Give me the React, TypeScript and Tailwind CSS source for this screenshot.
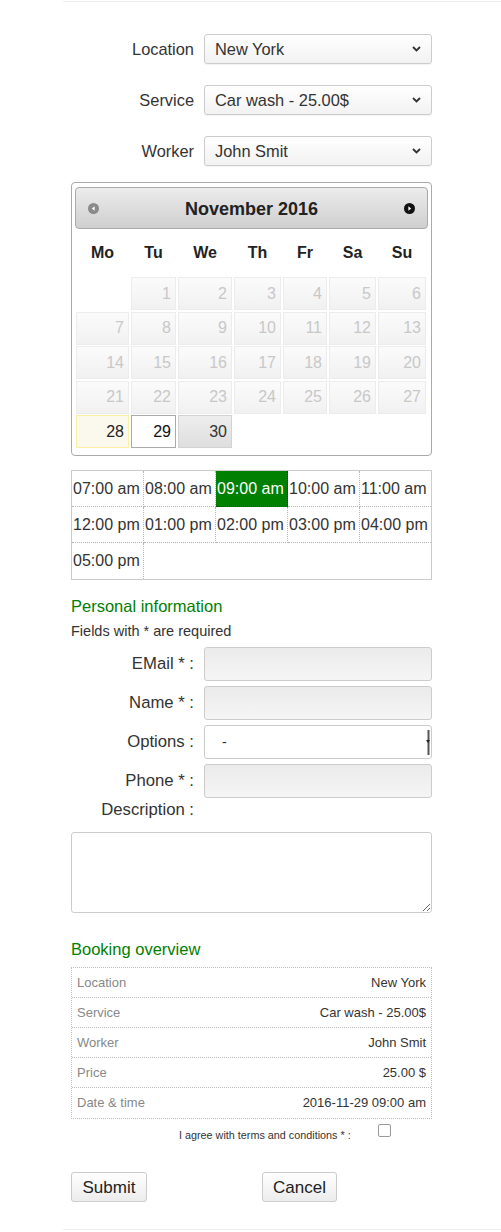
import type { ReactNode } from 'react';

const timeSlots = [
  '07:00 am',
  '08:00 am',
  '09:00 am',
  '10:00 am',
  '11:00 am',
  '12:00 pm',
  '01:00 pm',
  '02:00 pm',
  '03:00 pm',
  '04:00 pm',
  '05:00 pm',
];

const overview = [
  ['Location', 'New York'],
  ['Service', 'Car wash - 25.00$'],
  ['Worker', 'John Smit'],
  ['Price', '25.00 $'],
  ['Date & time', '2016-11-29 09:00 am'],
];

const weekDays = ['Mo', 'Tu', 'We', 'Th', 'Fr', 'Sa', 'Su'];

function Chevron() {
  return (
    <svg width="9" height="6" viewBox="0 0 9 6" className="mr-[10px] shrink-0">
      <path d="M1 1l3.5 3.5L8 1" fill="none" stroke="#333" strokeWidth="1.8" />
    </svg>
  );
}

function SelectRow({ label, value }: { label: string; value: string }) {
  return (
    <div className="flex h-[30px] items-center">
      <div className="w-[123px] pt-px text-right text-[16.4px]">{label}</div>
      <div className="ml-[10px] flex h-[30px] w-[228px] items-center rounded-[3px] border border-[#ccc] bg-gradient-to-b from-white to-[#f2f2f2] shadow-[0_1px_1px_rgba(0,0,0,0.05)]">
        <span className="flex-1 pl-[10px] pt-px text-[16.4px] text-[#333]">{value}</span>
        <Chevron />
      </div>
    </div>
  );
}

function FieldRow({ label, children }: { label: string; children: ReactNode }) {
  return (
    <div className="flex h-[34px] items-center">
      <div className="w-[123px] text-right text-[16.7px]">{label}</div>
      <div className="ml-[10px]">{children}</div>
    </div>
  );
}

function TextInput() {
  return (
    <div className="h-[34px] w-[228px] rounded-[3px] border border-[#ccc] bg-gradient-to-b from-[#ebebeb] to-[#f5f5f5]" />
  );
}

function DayCell({ day }: { day: number }) {
  let cls = 'border-[#ececec] bg-gradient-to-b from-[#fbfbfb] to-[#f1f1f1] text-[#c8c8c8]';
  if (day === 28) cls = 'border-[#fcefa1] bg-[#fbf9ee] text-[#222]';
  if (day === 29) cls = 'border-[#aaa] bg-white text-[#111]';
  if (day === 30) cls = 'border-[#d3d3d3] bg-gradient-to-b from-[#eeeeee] to-[#dedede] text-[#333]';
  return (
    <div className={`flex h-[33px] items-center justify-end border pr-[4px] text-[16px] ${cls}`}>{day}</div>
  );
}

function Calendar() {
  const cells: (number | null)[] = [null];
  for (let d = 1; d <= 30; d++) cells.push(d);
  return (
    <div className="mt-[16px] w-[361px] rounded-[4px] border border-[#aaa] p-[3px] pb-[7px] pt-[4px]">
      <div className="flex h-[42px] items-center rounded-[4px] border border-[#aaa] bg-gradient-to-b from-[#ececec] to-[#cfcfcf] px-[12px]">
        <svg width="11" height="11" viewBox="0 0 11 11">
          <circle cx="5.5" cy="5.5" r="5.5" fill="#8a8a8a" />
          <path d="M3.8 5.5L6.6 3.3v4.4z" fill="#fff" />
        </svg>
        <div className="flex-1 pt-[2px] text-center text-[18px] font-bold text-[#222]">November 2016</div>
        <svg width="11" height="11" viewBox="0 0 11 11">
          <circle cx="5.5" cy="5.5" r="5.5" fill="#111" />
          <path d="M7.2 5.5L4.4 3.3v4.4z" fill="#fff" />
        </svg>
      </div>
      <div className="ml-px grid h-[48px] grid-cols-[53px_45px_54px_47px_44px_47px_48px] items-center gap-x-[2px]">
        {weekDays.map((w) => (
          <div key={w} className="text-center text-[16px] font-bold text-[#222]">
            {w}
          </div>
        ))}
      </div>
      <div className="ml-px grid grid-cols-[53px_45px_54px_47px_44px_47px_48px] gap-x-[2px] gap-y-[1.5px]">
        {cells.map((d, i) => (d === null ? <div key={i} /> : <DayCell key={i} day={d} />))}
      </div>
    </div>
  );
}

function TimeTable() {
  return (
    <div className="mt-[14px] w-[361px] border border-[#ccc]">
      <div className="grid grid-cols-[72px_72px_72px_72px_71px]">
        {timeSlots.map((t, i) => {
          const active = t === '09:00 am';
          const lastCol = i % 5 === 4;
          const lastRow = i >= 10;
          return (
            <div
              key={t}
              className={`flex h-[36px] items-center whitespace-nowrap border-dotted pl-px text-[16px] ${
                lastRow ? 'h-[35px] border-r' : 'border-b'
              } ${lastCol ? '' : 'border-r'} ${
                active ? 'border-[#1a3a1a] bg-[#008000] text-white' : 'border-[#b5b5b5] text-[#333]'
              }`}
            >
              {t}
            </div>
          );
        })}
      </div>
    </div>
  );
}

export default function App() {
  return (
    <div className="min-h-[1232px] bg-white font-['Liberation_Sans',Arial,sans-serif] text-[#333]">
      <div className="ml-[63px] mt-px w-[438px] border-y border-[#eeeeee] pb-[27px] pl-[8px] pt-[32px]">
        <div className="w-[361px]">
          <div className="flex flex-col gap-[21px]">
            <SelectRow label="Location" value="New York" />
            <SelectRow label="Service" value="Car wash - 25.00$" />
            <SelectRow label="Worker" value="John Smit" />
          </div>

          <Calendar />
          <TimeTable />

          <div className="mt-[16px] h-[20px] text-[16.5px] leading-[20px] text-[#008000]">Personal information</div>
          <div className="mt-[6px] h-[18px] text-[14.5px] leading-[18px]">Fields with * are required</div>

          <div className="mt-[7px] flex flex-col gap-[5px]">
            <FieldRow label="EMail * :">
              <TextInput />
            </FieldRow>
            <FieldRow label="Name * :">
              <TextInput />
            </FieldRow>
            <FieldRow label="Options :">
              <div className="flex h-[34px] w-[228px] items-center rounded-[3px] border border-[#ccc] bg-white">
                <span className="flex-1 pl-[17px] text-[14px]">-</span>
                <svg width="4" height="30" viewBox="0 0 4 30" className="mr-px">
                  <path d="M2.5 3v25" stroke="#555" strokeWidth="2" />
                  <path d="M0 13h4l-2 3z" fill="#222" />
                </svg>
              </div>
            </FieldRow>
            <FieldRow label="Phone * :">
              <TextInput />
            </FieldRow>
          </div>

          <div className="mt-[2px] flex h-[20px] items-center">
            <div className="w-[123px] text-right text-[16.7px]">Description :</div>
          </div>
          <textarea
            readOnly
            className="mt-[12px] block h-[81px] w-[361px] rounded-[3px] border border-[#ccc] bg-white outline-none"
          />

          <div className="mt-[26px] h-[20px] text-[16.5px] leading-[20px] text-[#008000]">Booking overview</div>
          <div className="mt-[8px] w-[361px] border border-dotted border-[#bbb]">
            {overview.map(([k, v], i) => (
              <div
                key={k}
                className={`flex h-[30px] items-center justify-between px-[5px] text-[13px] ${
                  i < overview.length - 1 ? 'border-b border-dotted border-[#bbb]' : ''
                }`}
              >
                <span className="text-[#888]">{k}</span>
                <span className="text-[#333]">{v}</span>
              </div>
            ))}
          </div>

          <div className="mt-[5px] flex items-start">
            <div className="w-[108px]" />
            <span className="mt-[5px] text-[10.8px] leading-[13px] text-[#333]">I agree with terms and conditions * :</span>
            <div className="ml-[27px] h-[13px] w-[13px] rounded-[2px] border border-[#999] bg-white" />
          </div>

          <div className="mt-[30px] flex">
            <button className="h-[30px] w-[76px] rounded-[3px] border border-[#ccc] bg-gradient-to-b from-white to-[#ececec] pt-px text-[17px] text-[#222]">
              Submit
            </button>
            <button className="ml-[115px] h-[30px] w-[75px] rounded-[3px] border border-[#ccc] bg-gradient-to-b from-white to-[#ececec] pt-px text-[17px] text-[#222]">
              Cancel
            </button>
          </div>
        </div>
      </div>
    </div>
  );
}
